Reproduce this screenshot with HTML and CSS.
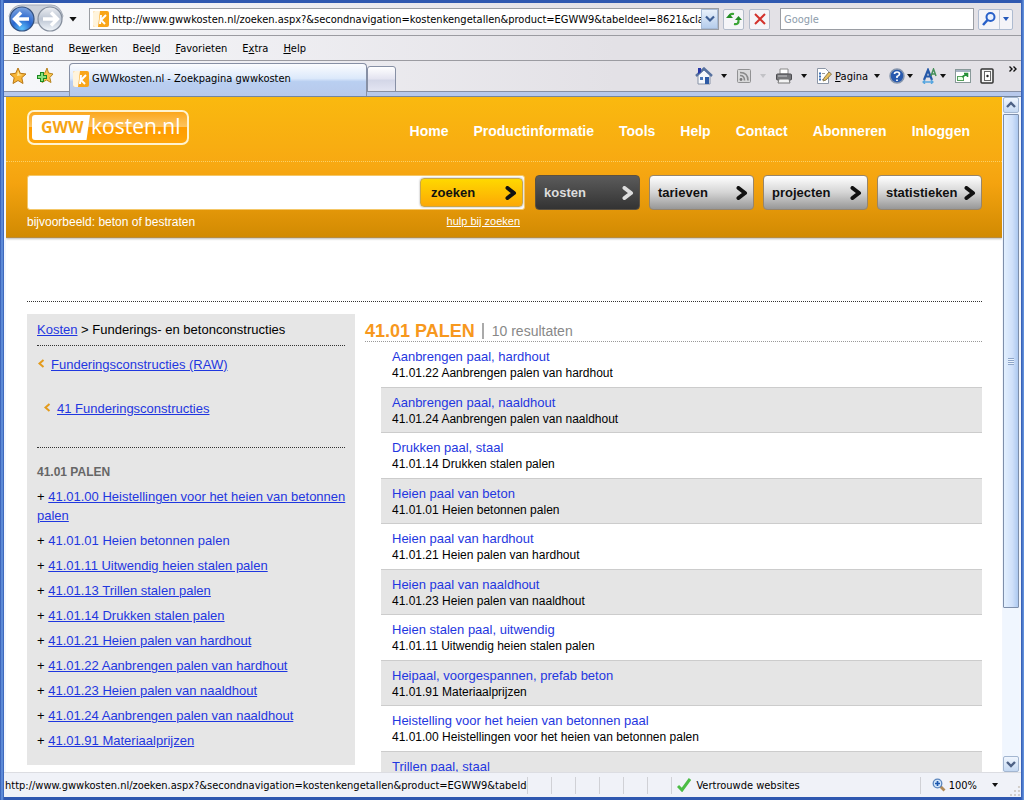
FILE: index.html
```html
<!DOCTYPE html>
<html lang="nl">
<head>
<meta charset="utf-8">
<meta name="viewport" content="width=device-width, initial-scale=1">
<title>GWWkosten.nl - Zoekpagina gwwkosten</title>
<link rel="stylesheet" href="styles.css">
</head>
<body>
<div class="window">
  <div class="address-bar">
    <div class="history">
      <svg class="history-art" viewBox="0 0 56 30" aria-hidden="true">
        <defs>
          <radialGradient id="back" cx=".5" cy=".9" r=".9"><stop offset="0" stop-color="#5cc0fa"/><stop offset=".45" stop-color="#2866cf"/><stop offset="1" stop-color="#7fa5df"/></radialGradient>
          <linearGradient id="fwd" x2="0" y2="1"><stop offset="0" stop-color="#eceef2"/><stop offset=".5" stop-color="#bcc5d3"/><stop offset="1" stop-color="#f2f6fb"/></linearGradient>
        </defs>
        <path d="M14 1H43Q52 1 55 12L50 22Q28 16 6 22L1 12Q4 1 14 1Z" fill="#ccd1da" stroke="#a4abb8"/>
        <circle cx="14" cy="15" r="12" fill="url(#back)" stroke="#34517f" stroke-width="1.2"/>
        <path d="M13 8.500L6.500 15L13 21.500M7 15H21" fill="none" stroke="#fff" stroke-width="3.400"/>
        <circle cx="42" cy="15" r="12" fill="url(#fwd)" stroke="#848d9c" stroke-width="1.200"/>
        <path d="M43 8.500L49.500 15L43 21.500M35 15H49" fill="none" stroke="#fff" stroke-width="3.400"/>
      </svg>
      <button class="caret-button" aria-label="Recente pagina's"><span class="caret caret-big"></span></button>
    </div>
    <div class="url-box">
      <svg class="favicon" viewBox="0 0 16 16" aria-hidden="true"><rect width="16" height="16" rx="2" fill="#f9a61a"/><path d="M0 2Q0 0 2 0H7L5 16H2Q0 16 0 14Z" fill="#fff4dc"/><path d="M8 4L7 13M13 4L8 9L12 13" fill="none" stroke="#fff" stroke-width="2"/></svg>
      <input class="url-input" type="text" aria-label="Adres" value="http://www.gwwkosten.nl/zoeken.aspx?&amp;secondnavigation=kostenkengetallen&amp;product=EGWW9&amp;tabeldeel=8621&amp;classif">
      <button class="url-drop" aria-label="Adressen tonen"><svg viewBox="0 0 10 8" width="10" height="8"><path d="M1 1.500L5 5.500L9 1.500" fill="none" stroke="#3f5f94" stroke-width="2.200"/></svg></button>
    </div>
    <button class="tool-button" aria-label="Vernieuwen"><svg viewBox="0 0 16 16" width="16" height="16"><path d="M8 3Q3 2 3.500 7" fill="none" stroke="#3ba535" stroke-width="2.200"/><path d="M0 7H7L3.500 3Z" fill="#238c24"/><path d="M8 13Q13 14 12.500 9" fill="none" stroke="#3ba535" stroke-width="2.200"/><path d="M9 9H16L12.500 5Z" fill="#238c24"/></svg></button>
    <button class="tool-button stop" aria-label="Stoppen"><svg viewBox="0 0 14 14" width="14" height="14"><path d="M2 2L12 12M12 2L2 12" stroke="#d3322c" stroke-width="2"/></svg></button>
    <input class="google-input" type="text" aria-label="Google" placeholder="Google">
    <div class="search-tools">
      <button aria-label="Zoeken"><svg viewBox="0 0 16 16" width="16" height="16"><circle cx="9.500" cy="6" r="4" fill="#eaf2ff" stroke="#2860c9" stroke-width="2"/><path d="M6.500 9L2 14" stroke="#2860c9" stroke-width="2.500"/></svg></button>
      <button class="narrow" aria-label="Zoekopties"><span class="caret blue"></span></button>
    </div>
  </div>

  <nav class="menu-bar" aria-label="Browsermenu">
    <button><u>B</u>estand</button><button>Be<u>w</u>erken</button><button>Bee<u>l</u>d</button><button><u>F</u>avorieten</button><button>E<u>x</u>tra</button><button><u>H</u>elp</button>
  </nav>

  <div class="tab-bar">
    <div class="favorites">
      <button aria-label="Favorietencentrum"><svg viewBox="0 0 18 18" width="18" height="18"><path d="M9 1L11.300 6.300L17 7L12.800 10.700L14 16.500L9 13.500L4 16.500L5.200 10.700L1 7L6.700 6.300Z" fill="#f8b536" stroke="#b97918"/><path d="M9 3.500L10.300 7.300L13.500 8L8 9Z" fill="#ffe9a0"/></svg></button>
      <button aria-label="Toevoegen aan Favorieten"><svg viewBox="0 0 18 18" width="18" height="18"><path d="M11 1L12.500 6L17 7L13.800 10.500L15 15.500L10.500 13L6 15.500L7 10.500L4 7L9 6Z" fill="#f8c54e" stroke="#b98420"/><path d="M6 5V15M1 10H11" stroke="#1b8a22" stroke-width="4"/><path d="M6 6V14M2 10H10" stroke="#8be07e" stroke-width="2"/></svg></button>
    </div>
    <button class="tab">
      <svg class="favicon" viewBox="0 0 16 16" aria-hidden="true"><rect width="16" height="16" rx="2" fill="#f9a61a"/><path d="M0 2Q0 0 2 0H7L5 16H2Q0 16 0 14Z" fill="#fff4dc"/><path d="M8 4L7 13M13 4L8 9L12 13" fill="none" stroke="#fff" stroke-width="2"/></svg>
      <span>GWWkosten.nl - Zoekpagina gwwkosten</span>
    </button>
    <button class="new-tab" aria-label="Nieuw tabblad"></button>
    <div class="commands">
      <button class="wide-gap" aria-label="Startpagina"><svg viewBox="0 0 18 18" width="18" height="18"><path d="M3 8V17H15V8L9 3Z" fill="#f5f7fb" stroke="#8792a6"/><path d="M1 9L9 1.500L17 9" fill="none" stroke="#56719f" stroke-width="2.400"/><path d="M3 1H6V5L3 7Z" fill="#2737a8"/><rect x="10" y="10" width="4" height="7" fill="#2d5aa5"/><rect x="5" y="10" width="3" height="3" fill="#4a76b8"/></svg><span class="caret"></span></button>
      <button class="wide-gap muted" aria-label="Feeds"><svg viewBox="0 0 16 16" width="16" height="16"><rect x="1.500" y="1.500" width="13" height="13" rx="1" fill="#d9d9da" stroke="#919193"/><circle cx="5" cy="11.500" r="1.400" fill="#777"/><path d="M4 7.500Q8.500 7.500 8.500 12.500M4 4.500Q12 4.500 12 12.500" fill="none" stroke="#8a8a8a" stroke-width="1.600"/></svg><span class="caret"></span></button>
      <button class="wide-gap" aria-label="Afdrukken"><svg viewBox="0 0 18 16" width="18" height="16"><path d="M5 1H13V6H5Z" fill="#fff" stroke="#888"/><rect x="1.500" y="6" width="15" height="6" rx="1" fill="#77777a" stroke="#4c4c50"/><path d="M4 11H14L15 15H3Z" fill="#f4f4f4" stroke="#777"/><path d="M3 8H12" stroke="#c8c8ca"/></svg><span class="caret"></span></button>
      <button class="page-command"><svg viewBox="0 0 16 16" width="16" height="16"><path d="M1.500 .5H9.500L12.500 3.500V15.500H1.500Z" fill="#fff" stroke="#8c96a6"/><path d="M3 5.500H5M3 8.500H5M3 11.500H5" stroke="#3c70b8" stroke-width="2"/><path d="M6 5.500H9M6 11.500H9" stroke="#999"/><path d="M7 13L8 10L13 4L15.500 6L10 12Z" fill="#e9bf5b" stroke="#8b7c55"/></svg><span><u>P</u>agina</span><span class="caret"></span></button>
      <button aria-label="Help"><svg viewBox="0 0 16 16" width="16" height="16"><circle cx="8" cy="8" r="7" fill="#2859ae" stroke="#8796ad" stroke-width="1.500"/><path d="M5.500 6Q5.500 4 8 4Q10.500 4 10.500 6Q10.500 7.500 8 8.500V10M8 11.500V13" fill="none" stroke="#fff" stroke-width="1.700"/></svg><span class="caret"></span></button>
      <button aria-label="Tekengrootte"><svg viewBox="0 0 16 16" width="16" height="16"><path d="M2 12L6 2L10 12M4 8.500H8" fill="none" stroke="#2558a8" stroke-width="2.200"/><path d="M9 8L11.500 1L14 8M10 6H13" fill="none" stroke="#47905a" stroke-width="1.500"/><path d="M1 14H11M3 12L1 14L3 16M9 12L11 14L9 16" fill="none" stroke="#56a5df" stroke-width="1.300"/></svg><span class="caret"></span></button>
      <button aria-label="Venster"><svg viewBox="0 0 16 14" width="16" height="14"><rect x=".5" y=".5" width="15" height="13" fill="#fff" stroke="#899"/><path d="M1 2H15" stroke="#a5b1c2" stroke-width="2"/><rect x="2.500" y="7.500" width="6" height="4" fill="#e7ffe5" stroke="#55a05c"/><path d="M7 8L12 5M9 4.500H12.500V8" fill="none" stroke="#27903a" stroke-width="1.600"/></svg></button>
      <button aria-label="Onderzoek"><svg viewBox="0 0 14 16" width="14" height="16"><rect x="1" y="1" width="12" height="14" rx="1" fill="#f4f4f4" stroke="#333" stroke-width="1.500"/><rect x="4.500" y="3.500" width="6" height="9" fill="#fff" stroke="#666"/><circle cx="7.500" cy="8" r="1.200" fill="#222"/></svg></button>
      <button class="overflow" aria-label="Meer"><svg viewBox="0 0 8 6" width="8" height="6"><path d="M.5 .5L3 3L.5 5.500M4.500 .5L7 3L4.500 5.500" fill="none" stroke="#111" stroke-width="1.400"/></svg></button>
    </div>
  </div>

  <div class="viewport">
    <div class="page">
      <header class="site-header">
        <div class="header-top">
          <a class="logo" href="#" aria-label="GWWkosten.nl"><span class="logo-gww">GWW</span><span class="logo-rest">kosten.nl</span></a>
          <nav class="site-nav" aria-label="Hoofdmenu">
            <a href="#">Home</a><a href="#">Productinformatie</a><a href="#">Tools</a><a href="#">Help</a><a href="#">Contact</a><a href="#">Abonneren</a><a href="#">Inloggen</a>
          </nav>
        </div>
        <div class="header-search">
          <form class="search">
            <div class="search-box">
              <input type="text" aria-label="Zoekterm">
              <button class="pill pill-search" type="button">zoeken<svg class="chevron" viewBox="0 0 12 14"><path d="M2.500 2L9 7L2.500 12" /></svg></button>
            </div>
            <div class="search-notes"><span>bijvoorbeeld: beton of bestraten</span><a href="#">hulp bij zoeken</a></div>
          </form>
          <div class="sections">
            <button class="pill pill-active">kosten<svg class="chevron" viewBox="0 0 12 14"><path d="M2.500 2L9 7L2.500 12"/></svg></button>
            <button class="pill">tarieven<svg class="chevron" viewBox="0 0 12 14"><path d="M2.500 2L9 7L2.500 12"/></svg></button>
            <button class="pill">projecten<svg class="chevron" viewBox="0 0 12 14"><path d="M2.500 2L9 7L2.500 12"/></svg></button>
            <button class="pill">statistieken<svg class="chevron" viewBox="0 0 12 14"><path d="M2.500 2L9 7L2.500 12"/></svg></button>
          </div>
        </div>
      </header>

      <main class="content">
        <aside class="sidebar">
          <div class="crumb"><a href="#">Kosten</a> &gt; Funderings- en betonconstructies</div>
          <div class="parents">
            <div class="parent"><svg class="back-mark" viewBox="0 0 7 9"><path d="M6 1L2 4.500L6 8"/></svg><a href="#">Funderingsconstructies (RAW)</a></div>
            <div class="parent nested"><svg class="back-mark" viewBox="0 0 7 9"><path d="M6 1L2 4.500L6 8"/></svg><a href="#">41 Funderingsconstructies</a></div>
          </div>
          <h2>41.01 PALEN</h2>
          <ul class="tree">
            <li>+ <a href="#">41.01.00 Heistellingen voor het heien van betonnen palen</a></li>
            <li>+ <a class="current" href="#">41.01.01 Heien betonnen palen</a></li>
            <li>+ <a href="#">41.01.11 Uitwendig heien stalen palen</a></li>
            <li>+ <a href="#">41.01.13 Trillen stalen palen</a></li>
            <li>+ <a href="#">41.01.14 Drukken stalen palen</a></li>
            <li>+ <a href="#">41.01.21 Heien palen van hardhout</a></li>
            <li>+ <a href="#">41.01.22 Aanbrengen palen van hardhout</a></li>
            <li>+ <a href="#">41.01.23 Heien palen van naaldhout</a></li>
            <li>+ <a href="#">41.01.24 Aanbrengen palen van naaldhout</a></li>
            <li>+ <a href="#">41.01.91 Materiaalprijzen</a></li>
          </ul>
        </aside>
        <section class="results">
          <div class="results-head"><h1>41.01 PALEN</h1><span>10 resultaten</span></div>
          <ul class="result-list">
            <li><a href="#">Aanbrengen paal, hardhout</a><p>41.01.22 Aanbrengen palen van hardhout</p></li>
            <li><a href="#">Aanbrengen paal, naaldhout</a><p>41.01.24 Aanbrengen palen van naaldhout</p></li>
            <li><a href="#">Drukken paal, staal</a><p>41.01.14 Drukken stalen palen</p></li>
            <li><a href="#">Heien paal van beton</a><p>41.01.01 Heien betonnen palen</p></li>
            <li><a href="#">Heien paal van hardhout</a><p>41.01.21 Heien palen van hardhout</p></li>
            <li><a href="#">Heien paal van naaldhout</a><p>41.01.23 Heien palen van naaldhout</p></li>
            <li><a href="#">Heien stalen paal, uitwendig</a><p>41.01.11 Uitwendig heien stalen palen</p></li>
            <li><a href="#">Heipaal, voorgespannen, prefab beton</a><p>41.01.91 Materiaalprijzen</p></li>
            <li><a href="#">Heistelling voor het heien van betonnen paal</a><p>41.01.00 Heistellingen voor het heien van betonnen palen</p></li>
            <li><a href="#">Trillen paal, staal</a></li>
          </ul>
        </section>
      </main>
    </div>
    <div class="scrollbar" aria-hidden="true">
      <div class="scroll-button"><svg viewBox="0 0 10 8" width="10" height="8"><path d="M1 6L5 2L9 6" fill="none" stroke="#4d6185" stroke-width="2.400"/></svg></div>
      <div class="scroll-track"><div class="scroll-thumb"><span class="grip"></span></div></div>
      <div class="scroll-button"><svg viewBox="0 0 10 8" width="10" height="8"><path d="M1 2L5 6L9 2" fill="none" stroke="#4d6185" stroke-width="2.400"/></svg></div>
    </div>
  </div>

  <footer class="status-bar">
    <div class="status-url">http://www.gwwkosten.nl/zoeken.aspx?&amp;secondnavigation=kostenkengetallen&amp;product=EGWW9&amp;tabeldeel=</div>
    <div class="cell"></div><div class="cell"></div><div class="cell"></div><div class="cell"></div><div class="cell"></div><div class="cell"></div>
    <div class="zone"><svg viewBox="0 0 14 14" width="14" height="14"><path d="M1 8L5 12L13 1" fill="none" stroke="#4bbd45" stroke-width="3"/></svg>Vertrouwde websites</div>
    <button class="zoom"><svg viewBox="0 0 14 14" width="14" height="14"><path d="M8 8L12.500 12.500" stroke="#b08a58" stroke-width="2.800"/><circle cx="5.500" cy="5.500" r="4.300" fill="#d4e7fb" stroke="#5c86bd" stroke-width="1.300"/><path d="M5.500 3V8M3 5.500H8" stroke="#1d58ae" stroke-width="1.700"/></svg><span>100%</span><span class="caret"></span></button>
    <svg class="resize" viewBox="0 0 12 12" aria-hidden="true"><path d="M9 1h2v2h-2zM5 5h2v2h-2zM9 5h2v2h-2zM1 9h2v2h-2zM5 9h2v2h-2zM9 9h2v2h-2z" fill="#d3cfcb"/></svg>
  </footer>
</div>
</body>
</html>
```

FILE: styles.css
```css
* { box-sizing: border-box; }

body {
  margin: 0;
  font-family: "Liberation Sans", Arial, sans-serif;
  font-size: 12px;
  color: #000;
}

button, input { font: inherit; color: inherit; }

button {
  padding: 0;
  border: 0;
  background: none;
}

ul, p, h1, h2 { margin: 0; padding: 0; }
ul { list-style: none; }

/* Browser window */
.window {
  display: flex;
  flex-direction: column;
  height: 100vh;
  padding: 3px 3px 3px 4px;
  background: linear-gradient(90deg, #3055ae 0, #6b9be4 2px, #2f58b0 4px, #2f58b0 calc(100% - 3px), #6b9be4 100%);
}

.address-bar, .menu-bar, .tab-bar, .status-bar {
  flex: none;
  font-family: "DejaVu Sans Condensed", "Noto Sans", sans-serif;
  font-size: 11px;
}

.caret {
  width: 6px;
  height: 4px;
  background: #111;
  clip-path: polygon(0 0, 100% 0, 50% 100%);
}
.caret-big { width: 8px; height: 5px; }
.caret.blue { background: #2358ba; }

.address-bar {
  display: flex;
  align-items: center;
  height: 33px;
  padding: 0 8px 0 4px;
  border-bottom: 1px solid #9b9ba1;
  background: linear-gradient(90deg, #f7f8fb, #e3e1e6 60%);
}

.history { display: flex; align-items: center; gap: 5px; width: 81px; }
.history-art { width: 56px; height: 30px; }
.caret-button { display: flex; }

.url-box {
  display: flex;
  align-items: center;
  flex: 1 1 629px;
  min-width: 0;
  height: 22px;
  padding-left: 3px;
  border: 1px solid #9a9da3;
  background: #fff;
}
.favicon { flex: none; width: 16px; height: 16px; }
.url-input {
  flex: 1;
  min-width: 0;
  padding: 0 0 0 3px;
  border: 0;
  background: none;
  outline: 0;
}
.url-drop {
  display: grid;
  place-items: center;
  width: 17px;
  height: 20px;
  border: 1px solid #a6bad6;
  background: linear-gradient(#e9f1fb, #b5cdec);
}
.tool-button {
  display: grid;
  place-items: center;
  flex: none;
  width: 21px;
  height: 21px;
  margin-left: 4px;
  border: 1px solid #b3bccb;
  border-radius: 2px;
  background: #f5f5f8;
}
.tool-button.stop { margin-left: 5px; }
.google-input {
  flex: 0 1 194px;
  min-width: 60px;
  height: 22px;
  margin-left: 10px;
  padding: 0 3px;
  border: 1px solid #9a9da3;
  background: #fff;
}
.google-input::placeholder { color: #8d9cab; opacity: 1; }
.search-tools {
  display: flex;
  flex: none;
  margin-left: 4px;
  border: 1px solid #aebbd0;
  border-radius: 2px;
  background: #f4f4f8;
}
.search-tools button { display: grid; place-items: center; width: 20px; height: 19px; }
.search-tools .narrow { width: 13px; border-left: 1px solid #c2cad8; }

.menu-bar {
  display: flex;
  align-items: center;
  gap: 15px;
  height: 25px;
  padding: 0 9px;
  border-bottom: 1px solid #9b9ba1;
  background: linear-gradient(90deg, #f7f8fb, #e3e1e6 60%);
}

.tab-bar {
  display: flex;
  align-items: flex-end;
  height: 36px;
  border-bottom: 1px solid #74859f;
  background: linear-gradient(transparent 30px, #8790a5 30px, #8790a5 31px, #b8c9eb 31px), linear-gradient(90deg, #f7f8fb, #e3e1e6 60%);
}
.favorites { display: flex; align-items: center; gap: 9px; width: 65px; height: 100%; padding: 0 0 5px 5px; }
.favorites button { display: flex; }
.tab {
  display: flex;
  align-items: center;
  gap: 3px;
  flex: 0 1 298px;
  height: 33px;
  padding: 0 3px 3px;
  border: 1px solid #8790a5;
  border-bottom: 0;
  border-radius: 4px 4px 0 0;
  background: linear-gradient(#fbfcfe, #dce9fb 45%, #b9cff1 55%, #b8c9eb);
  white-space: nowrap;
}
.new-tab {
  align-self: flex-start;
  width: 29px;
  height: 26px;
  margin-top: 5px;
  border: 1px solid #8790a5;
  border-radius: 3px 3px 0 0;
  background: linear-gradient(#fff, #e3e3f0 50%, #d3d6e7 55%, #e3e5f2);
}
.commands {
  display: flex;
  align-items: center;
  gap: 9px;
  height: 100%;
  margin-left: auto;
  padding: 0 4px 5px 0;
}
.commands button { display: flex; align-items: center; gap: 2px; }
.commands .wide-gap { gap: 8px; }
.commands .page-command { gap: 3px; }
.page-command .caret { margin-left: 3px; }
.commands .muted .caret { background: #c2c2c6; }
.commands .overflow { align-self: flex-start; margin: 5px 0 0 6px; }

.status-bar {
  display: flex;
  align-items: center;
  height: 25px;
  border-top: 1px solid #dcdde2;
  background: #f0f2f8;
}
.status-url { flex: 1 1 525px; min-width: 0; overflow: hidden; white-space: nowrap; padding-left: 1px; }
.cell { flex: none; width: 24px; height: 17px; border-left: 1px solid #d0d1d6; }
.zone {
  display: flex;
  align-items: center;
  gap: 5px;
  flex: 0 1 249px;
  height: 17px;
  padding-left: 5px;
  border-left: 1px solid #d0d1d6;
}
.zoom {
  display: flex;
  align-items: center;
  gap: 3px;
  height: 17px;
  padding: 0 11px;
  border-left: 1px solid #d0d1d6;
}
.zoom .caret { margin-left: 12px; }
.resize { width: 12px; height: 12px; align-self: flex-end; }

/* Page area */
.viewport {
  display: flex;
  flex: 1;
  min-height: 0;
  padding: 0 2px 0 2px;
  background: #f2f6fd;
}
.page { flex: 1; min-width: 0; overflow: hidden; background: #fff; }

.scrollbar { display: flex; flex-direction: column; width: 16px; margin-left: 1px; background: #f0f6fe; }
.scroll-button {
  display: grid;
  place-items: center;
  flex: none;
  height: 16px;
  border: 1px solid #a3b6d0;
  border-radius: 2px;
  background: linear-gradient(#f0f6fe, #c4d8f2);
}
.scroll-track { flex: 1; padding-top: 1px; }
.scroll-thumb {
  display: grid;
  place-items: center;
  height: 77%;
  border: 1px solid #7e8fab;
  border-radius: 1px;
  background: linear-gradient(90deg, #e3f0fe, #cfe0fa 60%, #adc9f0);
}
.grip { width: 6px; height: 7px; background: repeating-linear-gradient(#8da5c9 0, #8da5c9 1px, #eaf3fd 1px, #eaf3fd 2px); }

.site-header {
  border-bottom: 1px solid #b98b3a;
  background: linear-gradient(#fab90f, #f7a812 50%, #f4a30f 62%, #d18a02);
  box-shadow: 0 1px 2px #bbb;
  color: #fff;
}
.header-top {
  display: flex;
  align-items: center;
  justify-content: space-between;
  height: 65px;
  padding: 0 32px 0 21px;
  border-bottom: 1px dotted #fbd068;
}
.logo {
  display: flex;
  gap: 1px;
  width: 162px;
  height: 35px;
  padding: 3px;
  margin-bottom: 3px;
  border: 2px solid #fff3cf;
  border-radius: 7px;
  background: linear-gradient(#fba71c, #fdc562 50%, #ff9c00 50%, #ffa60a);
  font-family: "Open Sans", sans-serif;
  line-height: 25px;
  color: #fff;
  text-decoration: none;
}
.logo-gww {
  width: 58px;
  padding-left: 9px;
  border-radius: 3px 0 0 3px;
  background: #fff;
  clip-path: polygon(0 0, 100% 0, 94% 100%, 0 100%);
  font-size: 16px;
  font-weight: 700;
  color: #f6a414;
}
.logo-rest { font-size: 21px; line-height: 22px; }

.site-nav { display: flex; gap: 25px; margin-top: 4px; font-size: 14px; font-weight: 700; }
.site-nav a { color: #fff; text-decoration: none; }

.header-search { display: flex; gap: 10px; height: 75px; padding: 13px 20px 0 21px; }
.search { flex: 1; min-width: 0; }
.search-box {
  display: flex;
  height: 35px;
  padding: 2px 1px 2px 6px;
  border: 1px solid #f4c768;
  border-radius: 3px;
  background: #fff;
}
.search-box input { flex: 1; min-width: 0; border: 0; background: none; outline: 0; }
.search-notes { display: flex; justify-content: space-between; padding: 4px 5px 0 0; line-height: 16px; }
.search-notes a { color: #fff; font-size: 11px; line-height: 14px; }

.sections { display: flex; gap: 9px; }
.pill {
  display: flex;
  align-items: center;
  justify-content: space-between;
  width: 105px;
  height: 35px;
  padding: 0 5px 0 8px;
  border: 1px solid #97856a;
  border-radius: 4px;
  background: linear-gradient(#fff, #d4d4d4 50%, #979797);
  font-size: 13px;
  font-weight: 700;
  color: #111;
}
.chevron { flex: none; width: 12px; height: 14px; fill: none; stroke: currentColor; stroke-width: 4; stroke-linecap: round; stroke-linejoin: round; }
.pill-active { border-color: #5c5140; background: linear-gradient(#5b5b5b, #333); color: #ddd; }
.pill-search {
  width: 103px;
  height: 29px;
  border: 1px solid #c9a649;
  background: linear-gradient(#ffd800, #fca905);
  box-shadow: 0 0 2px #999;
  padding-left: 10px;
}

.content {
  display: flex;
  align-items: flex-start;
  gap: 10px;
  margin: 63px 20px 0 21px;
  padding-top: 12px;
  border-top: 1px dotted #333;
  font-size: 13px;
}
a { color: #1f37e0; }

.sidebar { flex: 0 0 328px; padding: 6px 10px 9px; background: #e6e6e6; }
.crumb { padding: 2px 0 7px; border-bottom: 1px dotted #333; line-height: 16px; white-space: nowrap; }
.parents { padding: 10px 0 29px; border-bottom: 1px dotted #333; }
.parent { display: flex; gap: 6px; line-height: 18px; }
.parent.nested { margin-top: 26px; padding-left: 6px; }
.back-mark { flex: none; width: 8px; height: 9px; margin-top: 3px; fill: none; stroke: #e39b1c; stroke-width: 2; }
.sidebar h2 { margin: 15px 0 6px; font-size: 12px; line-height: 18px; color: #666; }
.tree { margin-right: -8px; }
.tree li { margin-bottom: 6px; line-height: 19px; }
.tree .current { text-decoration: none; }

.results { flex: 1; min-width: 0; }
.results-head {
  display: flex;
  align-items: center;
  gap: 7px;
  height: 28px;
  padding-top: 6px;
  border-bottom: 1px dotted #999;
}
.results-head h1 { font-size: 18px; line-height: 22px; color: #f7981d; }
.results-head span { padding-left: 8px; border-left: 2px solid #aaa; font-size: 14px; line-height: 16px; color: #888; }
.result-list { padding-left: 16px; }
.result-list li { padding: 7px 11px 6px; line-height: 16px; }
.result-list li:nth-child(even) { padding-bottom: 5px; border: solid #ccc; border-width: 1px 0; background: #e5e5e5; }
.result-list a { display: block; text-decoration: none; }
.result-list p { font-size: 12px; }
```
